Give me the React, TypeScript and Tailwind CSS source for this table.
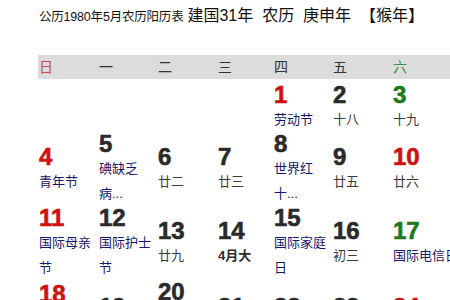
import React from "react";

type Cell = {
  n?: string;
  nc?: "red" | "dark" | "green";
  label?: string;
  lc?: "fest" | "lunar" | "bold";
  extra?: string;
} | null;

const rows: Cell[][] = [
  [null, null, null, null,
    { n: "1", nc: "red", label: "劳动节", lc: "fest" },
    { n: "2", nc: "dark", label: "十八", lc: "lunar" },
    { n: "3", nc: "green", label: "十九", lc: "lunar" }],
  [
    { n: "4", nc: "red", label: "青年节", lc: "fest" },
    { n: "5", nc: "dark", label: "碘缺乏病...", lc: "fest" },
    { n: "6", nc: "dark", label: "廿二", lc: "lunar" },
    { n: "7", nc: "dark", label: "廿三", lc: "lunar" },
    { n: "8", nc: "dark", label: "世界红十...", lc: "fest" },
    { n: "9", nc: "dark", label: "廿五", lc: "lunar" },
    { n: "10", nc: "red", label: "廿六", lc: "lunar" },
  ],
  [
    { n: "11", nc: "red", label: "国际母亲节", lc: "fest" },
    { n: "12", nc: "dark", label: "国际护士节", lc: "fest" },
    { n: "13", nc: "dark", label: "廿九", lc: "lunar" },
    { n: "14", nc: "dark", label: "4月大", lc: "bold" },
    { n: "15", nc: "dark", label: "国际家庭日", lc: "fest" },
    { n: "16", nc: "dark", label: "初三", lc: "lunar" },
    { n: "17", nc: "green", label: "国际电信日", lc: "fest" },
  ],
  [
    { n: "18", nc: "red", label: "国际博物馆日", lc: "fest" },
    { n: "19", nc: "dark", label: "初六", lc: "lunar" },
    { n: "20", nc: "dark", label: "全国学生...", lc: "fest", extra: "pb-[4px]" },
    { n: "21", nc: "dark", label: "初八", lc: "lunar" },
    { n: "22", nc: "dark", label: "初九", lc: "lunar" },
    { n: "23", nc: "dark", label: "初十", lc: "lunar" },
    { n: "24", nc: "red", label: "十一", lc: "lunar" },
  ],
];

const numColor = {
  red: "text-[#cf1111]",
  dark: "text-[#2a2a2a]",
  green: "text-[#1c7a1c]",
};

const labelColor = {
  fest: "text-[#16166a]",
  lunar: "text-[#3a3a3a]",
  bold: "text-[#2a2a2a] font-bold",
};

const weekdays = [
  { t: "日", c: "text-[#d04848]" },
  { t: "一", c: "text-[#333333]" },
  { t: "二", c: "text-[#333333]" },
  { t: "三", c: "text-[#333333]" },
  { t: "四", c: "text-[#333333]" },
  { t: "五", c: "text-[#333333]" },
  { t: "六", c: "text-[#3c8c3c]" },
];

const cols = "grid grid-cols-[60px_59px_60px_56px_59px_60px_72px]";

export default function App() {
  return (
    <div
      className="w-[450px] h-[300px] overflow-hidden bg-white"
      style={{ fontFamily: '"Liberation Sans", "Noto Sans CJK SC", sans-serif' }}
    >
      <div className="pl-[39px] pt-[6px] h-[55px] whitespace-nowrap text-[#111111] leading-[20px]">
        <span className="text-[12.5px] tracking-[-0.2px]">公历1980年5月农历阳历表</span>
        <span className="text-[16px] ml-[4px]">建国31年&nbsp; 农历&nbsp; 庚申年&nbsp; 【猴年】</span>
      </div>
      <div className={`${cols} ml-[38px] pl-[1px] h-[24px] bg-[#dcdcdc] items-center w-[430px]`}>
        {weekdays.map((w) => (
          <div key={w.t} className={`text-[14px] leading-[24px] ${w.c}`}>
            {w.t}
          </div>
        ))}
      </div>
      <div className="ml-[39px] mt-[4px]">
        {rows.map((row, ri) => (
          <div key={ri} className={`${cols} items-center`}>
            {row.map((c, ci) =>
              c ? (
                <div key={ci} className={`flex flex-col pr-[4px] ${c.extra ?? ""}`}>
                  <div className={`text-[24px] leading-[24px] font-bold [-webkit-text-stroke:0.6px_currentColor] ${numColor[c.nc!]}`}>{c.n}</div>
                  <div className={`text-[13px] leading-[25px] ${labelColor[c.lc!]}`}>{c.label}</div>
                </div>
              ) : (
                <div key={ci} />
              )
            )}
          </div>
        ))}
      </div>
    </div>
  );
}
